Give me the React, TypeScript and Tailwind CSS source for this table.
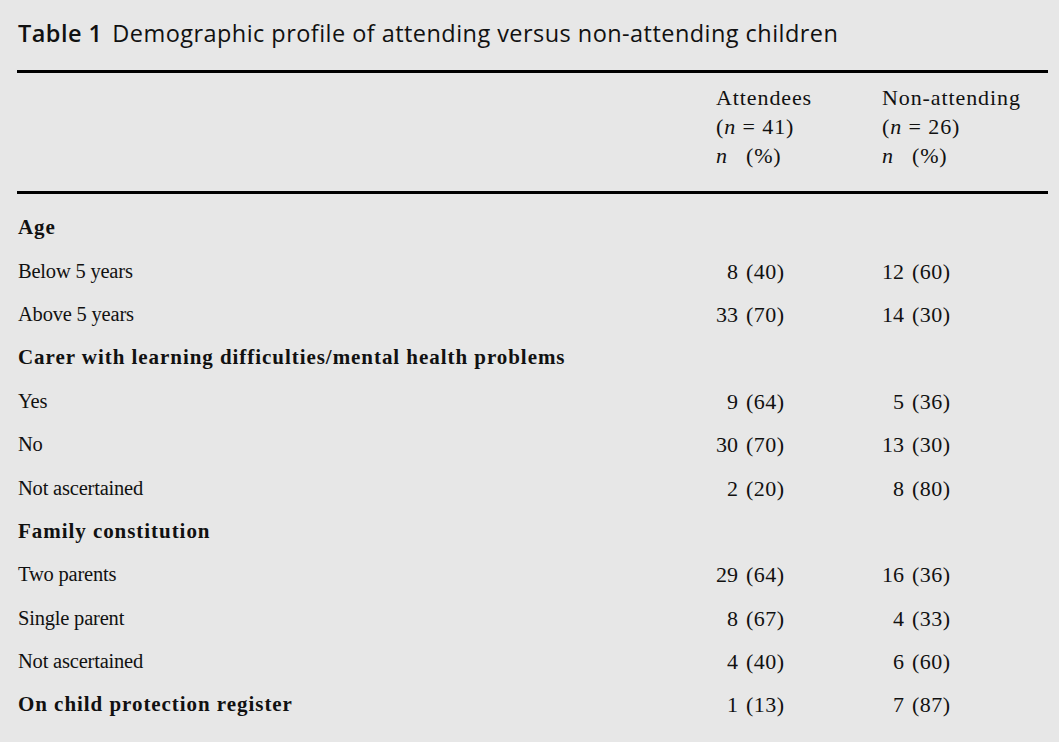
const rows: { label: string; bold?: boolean; a?: [string, string]; b?: [string, string] }[] = [
  { label: 'Age', bold: true },
  { label: 'Below 5 years', a: ['8', '40'], b: ['12', '60'] },
  { label: 'Above 5 years', a: ['33', '70'], b: ['14', '30'] },
  { label: 'Carer with learning difficulties/mental health problems', bold: true },
  { label: 'Yes', a: ['9', '64'], b: ['5', '36'] },
  { label: 'No', a: ['30', '70'], b: ['13', '30'] },
  { label: 'Not ascertained', a: ['2', '20'], b: ['8', '80'] },
  { label: 'Family constitution', bold: true },
  { label: 'Two parents', a: ['29', '64'], b: ['16', '36'] },
  { label: 'Single parent', a: ['8', '67'], b: ['4', '33'] },
  { label: 'Not ascertained', a: ['4', '40'], b: ['6', '60'] },
  { label: 'On child protection register', bold: true, a: ['1', '13'], b: ['7', '87'] },
]

const serif = "font-['Liberation_Serif','Times_New_Roman',serif]"

function HeaderCell({ title, n }: { title: string; n: number }) {
  return (
    <div className="w-[166px] shrink-0 leading-[29px] text-[22px] tracking-[0.9px]">
      <div>{title}</div>
      <div>
        (<i>n</i> = {n})
      </div>
      <div>
        <i>n</i>
        <span className="ml-[18px]">(%)</span>
      </div>
    </div>
  )
}

function Value({ v }: { v?: [string, string] }) {
  return (
    <div className="w-[166px] shrink-0 flex text-[22px]">
      {v && (
        <>
          <span className="w-[22px] text-right">{v[0]}</span>
          <span className="ml-[8px] tracking-[0.5px]">({v[1]})</span>
        </>
      )}
    </div>
  )
}

export default function App() {
  return (
    <div className="w-[1059px] h-[742px] bg-[#e7e7e7] text-[#111] overflow-hidden">
      <div className="pl-[17px] w-[1048px]">
        {/* ── Caption ─────────────────────────────────────────── */}
        <div className="pt-[16px] h-[70px] text-[23.5px] leading-[34px] tracking-[0.45px] font-['Open_Sans',sans-serif] pl-[1px] whitespace-nowrap">
          <span className="font-semibold">Table 1</span>
          <span className="ml-[10px]">Demographic profile of attending versus non-attending children</span>
        </div>

        <div className="h-[3px] bg-black" />

        {/* ── Column heads ────────────────────────────────────── */}
        <div className={`flex pt-[10px] pb-[21px] ${serif}`}>
          <div className="flex-1" />
          <HeaderCell title="Attendees" n={41} />
          <HeaderCell title="Non-attending" n={26} />
        </div>

        <div className="h-[3px] bg-black" />

        {/* ── Body ────────────────────────────────────────────── */}
        <div className={`pt-[12px] ${serif}`}>
          {rows.map((r, i) => (
            <div key={i} className="flex items-center h-[43.4px]">
              <div
                className={`flex-1 pl-[1px] ${
                  r.bold ? 'text-[21px] font-bold tracking-[0.95px]' : 'text-[20.5px] tracking-[-0.2px]'
                }`}
              >
                {r.label}
              </div>
              <Value v={r.a} />
              <Value v={r.b} />
            </div>
          ))}
        </div>
      </div>
    </div>
  )
}
